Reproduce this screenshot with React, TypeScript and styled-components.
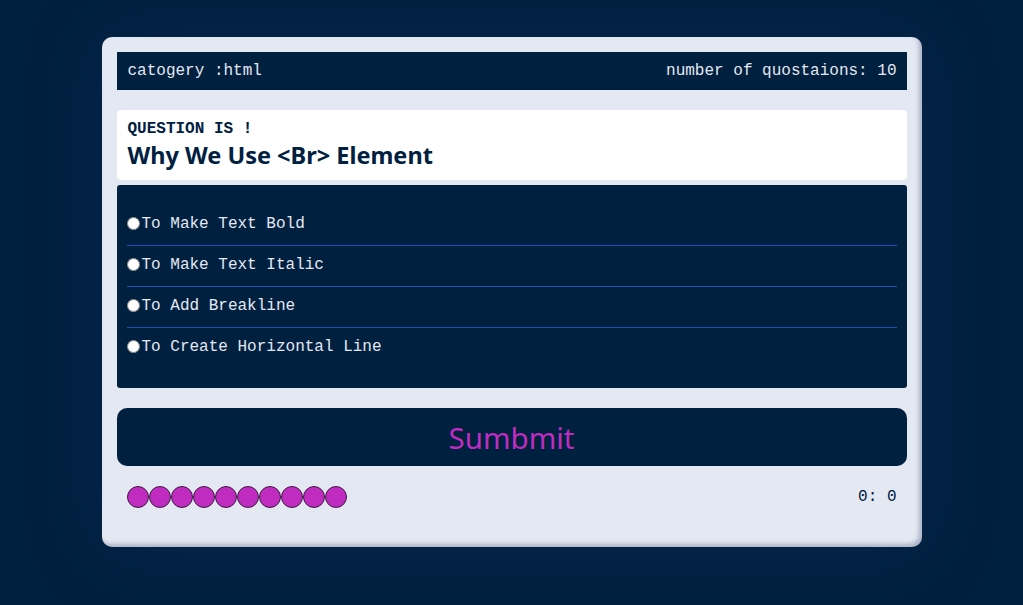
import React from "react";
import styled, { createGlobalStyle } from "styled-components";

const GlobalStyle = createGlobalStyle`
  html, body {
    margin: 0;
    padding: 0;
    background: #00203f;
  }
  body {
    font-family: "Liberation Mono", monospace;
  }
`;

const Page = styled.div`
  width: 1023px;
  height: 605px;
  background: #00203f;
  display: flex;
  justify-content: center;
  padding-top: 37px;
  box-sizing: border-box;
`;

const Card = styled.div`
  width: 820px;
  height: 510px;
  box-sizing: border-box;
  background: #e4e8f3;
  border-radius: 10px;
  padding: 15px;
  display: flex;
  flex-direction: column;
  box-shadow: inset -3px -3px 4px rgba(0, 20, 60, 0.25), 0 0 70px rgba(20, 50, 110, 0.35);
`;

const TopBar = styled.div`
  height: 38px;
  background: #00203f;
  color: #e4e8f3;
  display: flex;
  justify-content: space-between;
  align-items: center;
  padding: 0 10px 0 11px;
  font-family: "Liberation Mono", monospace;
  font-size: 16px;
`;

const QuestionBox = styled.div`
  margin-top: 20px;
  background: #ffffff;
  border-radius: 4px;
  height: 70px;
  box-sizing: border-box;
  padding: 10px 11px;
  color: #00203f;
`;

const QuestionLabel = styled.div`
  font-family: "Liberation Mono", monospace;
  font-weight: bold;
  font-size: 16px;
  line-height: 18px;
`;

const QuestionTitle = styled.h2`
  margin: 2px 0 0;
  font-family: "Noto Sans", sans-serif;
  font-weight: bold;
  font-size: 23.5px;
  line-height: 30px;
  color: #00203f;
`;

const AnswerList = styled.ul`
  list-style: none;
  margin: 5px 0 0;
  padding: 20px 10px;
  background: #00203f;
  border-radius: 3px;
`;

const AnswerItem = styled.li<{ $last?: boolean }>`
  height: ${(p) => (p.$last ? "40px" : "41px")};
  display: flex;
  align-items: center;
  padding-bottom: 3px;
  box-sizing: border-box;
  color: #e4e8f3;
  font-family: "Liberation Mono", monospace;
  font-size: 16px;
  border-bottom: ${(p) => (p.$last ? "none" : "1px solid #1e4fb8")};
`;

const Radio = styled.input`
  width: 13px;
  height: 13px;
  margin: 0 2px 0 0;
`;

const SubmitButton = styled.button`
  margin-top: 20px;
  height: 58px;
  border: none;
  border-radius: 10px;
  background: #00203f;
  color: #c02cc0;
  font-family: "Noto Sans", sans-serif;
  font-size: 29.5px;
  cursor: pointer;
`;

const Footer = styled.div`
  margin-top: 20px;
  display: flex;
  justify-content: space-between;
  align-items: center;
  padding: 0 10px;
  height: 22px;
`;

const Bullets = styled.div`
  display: flex;
`;

const Bullet = styled.span`
  width: 20px;
  height: 20px;
  border-radius: 50%;
  background: #c02cc0;
  border: 1px solid #3a1a40;
`;

const Score = styled.div`
  font-family: "Liberation Mono", monospace;
  font-size: 16px;
  color: #00203f;
`;

const answers = [
  "To Make Text Bold",
  "To Make Text Italic",
  "To Add Breakline",
  "To Create Horizontal Line",
];

export default function App() {
  return (
    <>
      <GlobalStyle />
      <Page>
        <Card>
          <TopBar>
            <span>catogery :html</span>
            <span>number of quostaions: 10</span>
          </TopBar>
          <QuestionBox>
            <QuestionLabel>QUESTION IS !</QuestionLabel>
            <QuestionTitle>Why We Use &lt;Br&gt; Element</QuestionTitle>
          </QuestionBox>
          <AnswerList>
            {answers.map((a, i) => (
              <AnswerItem key={a} $last={i === answers.length - 1}>
                <Radio type="radio" name="answer" />
                {a}
              </AnswerItem>
            ))}
          </AnswerList>
          <SubmitButton>Sumbmit</SubmitButton>
          <Footer>
            <Bullets>
              {Array.from({ length: 10 }).map((_, i) => (
                <Bullet key={i} />
              ))}
            </Bullets>
            <Score>0: 0</Score>
          </Footer>
        </Card>
      </Page>
    </>
  );
}
